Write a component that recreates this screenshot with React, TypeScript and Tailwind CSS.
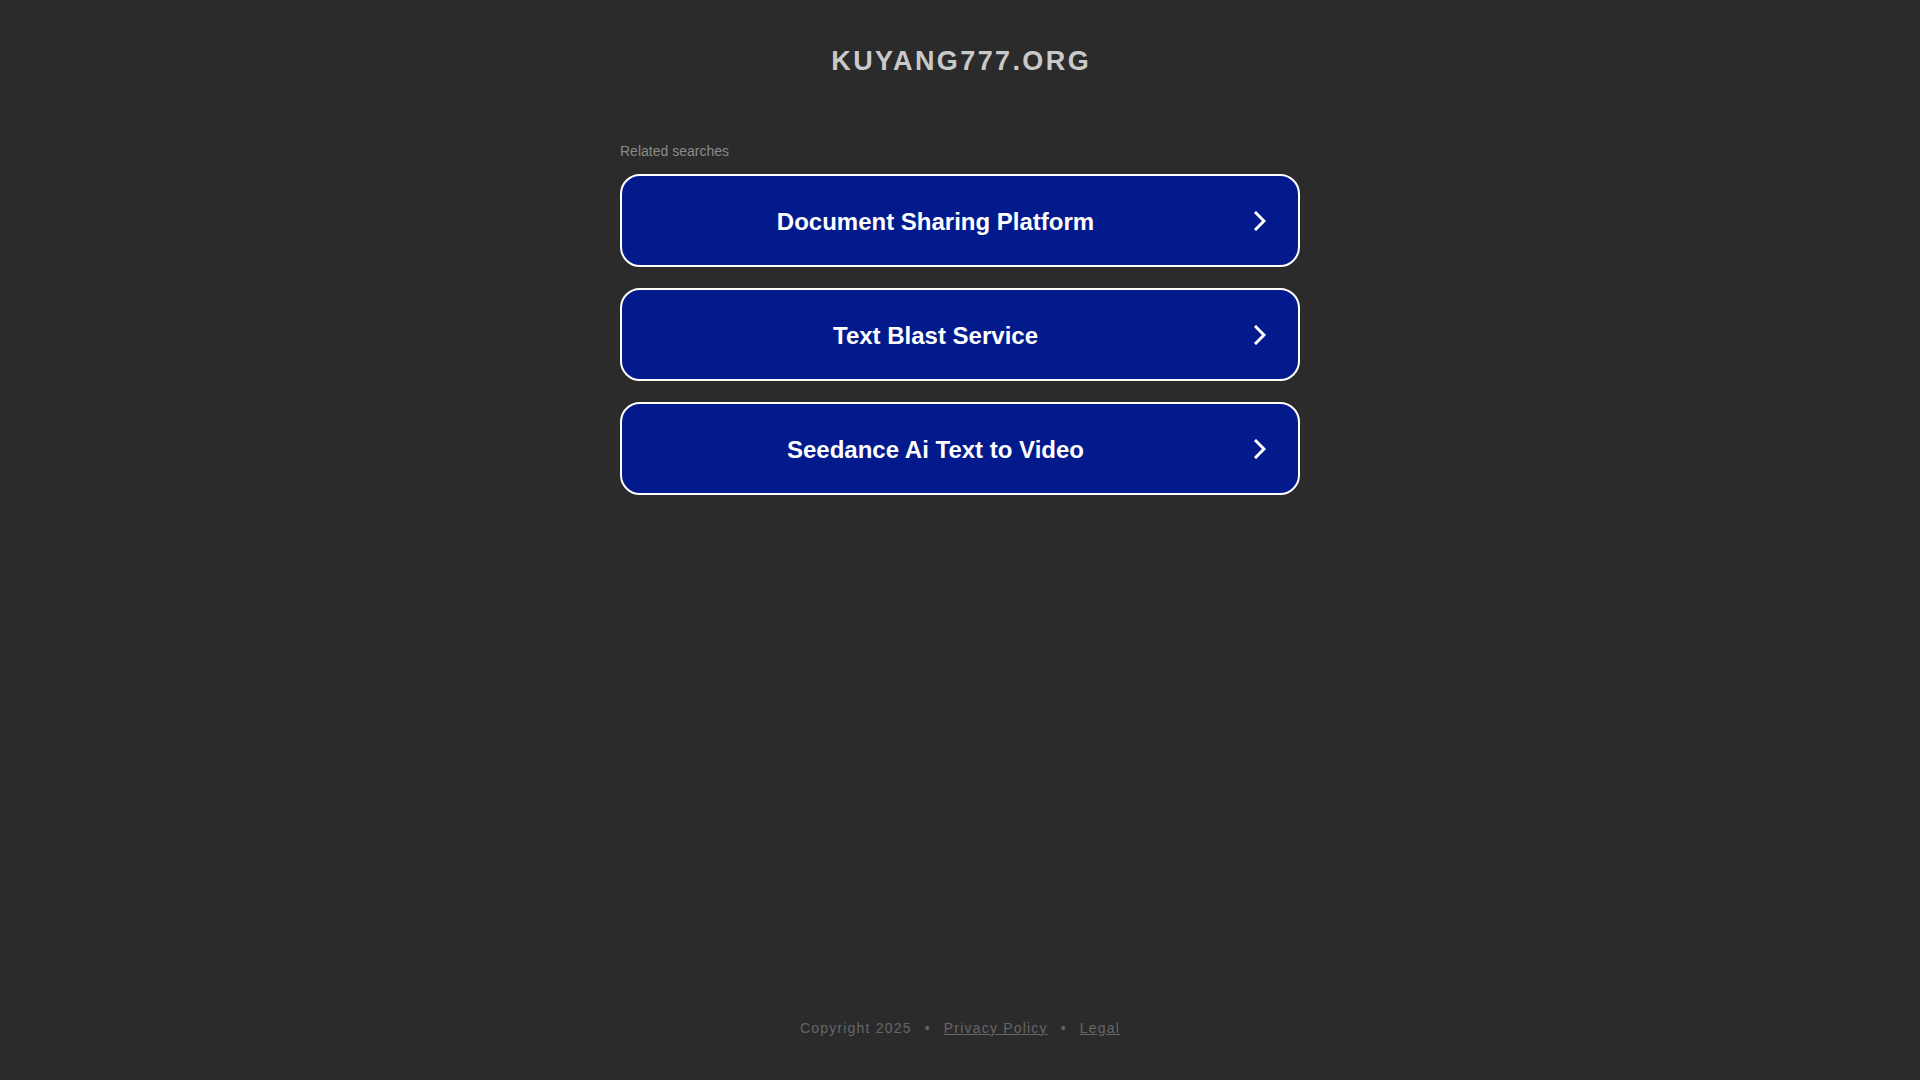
import React from "react";

const items = ["Document Sharing Platform", "Text Blast Service", "Seedance Ai Text to Video"];

function Chevron() {
  return (
    <svg width="12" height="20" viewBox="0 0 12 20" className="shrink-0">
      <path d="M2 2 L10 10 L2 18" fill="none" stroke="white" strokeWidth="3" strokeLinecap="square" strokeLinejoin="miter" />
    </svg>
  );
}

export default function App() {
  return (
    <div className="min-h-screen bg-[#2b2b2b] flex flex-col items-center font-['Liberation_Sans',Arial,sans-serif]">
      <h1 className="mt-[46px] h-[30px] leading-[30px] text-[27px] font-bold tracking-[2.4px] text-[#c9c9c9] pl-[2.4px]">
        KUYANG777.ORG
      </h1>
      <div className="w-[680px] mt-[67px] flex flex-col">
        <div className="text-[14px] leading-[16px] text-[#8a8a8a] mb-[15px]">Related searches</div>
        <div className="flex flex-col gap-[21px]">
          {items.map((t) => (
            <div
              key={t}
              className="h-[93px] rounded-[20px] border-2 border-white bg-[#021a8c] flex items-center pl-[19px] pr-[32px] gap-[24px]"
            >
              <span className="flex-1 text-center text-white font-bold text-[24px] leading-[28px] pt-[2px]">{t}</span>
              <Chevron />
            </div>
          ))}
        </div>
      </div>
      <footer className="mt-auto pb-[42px] flex items-center text-[14px] leading-[20px] tracking-[1.2px] text-[#666666]">
        <span>Copyright 2025</span>
        <span className="mx-[13px]">•</span>
        <span className="underline">Privacy Policy</span>
        <span className="mx-[13px]">•</span>
        <span className="underline">Legal</span>
      </footer>
    </div>
  );
}
